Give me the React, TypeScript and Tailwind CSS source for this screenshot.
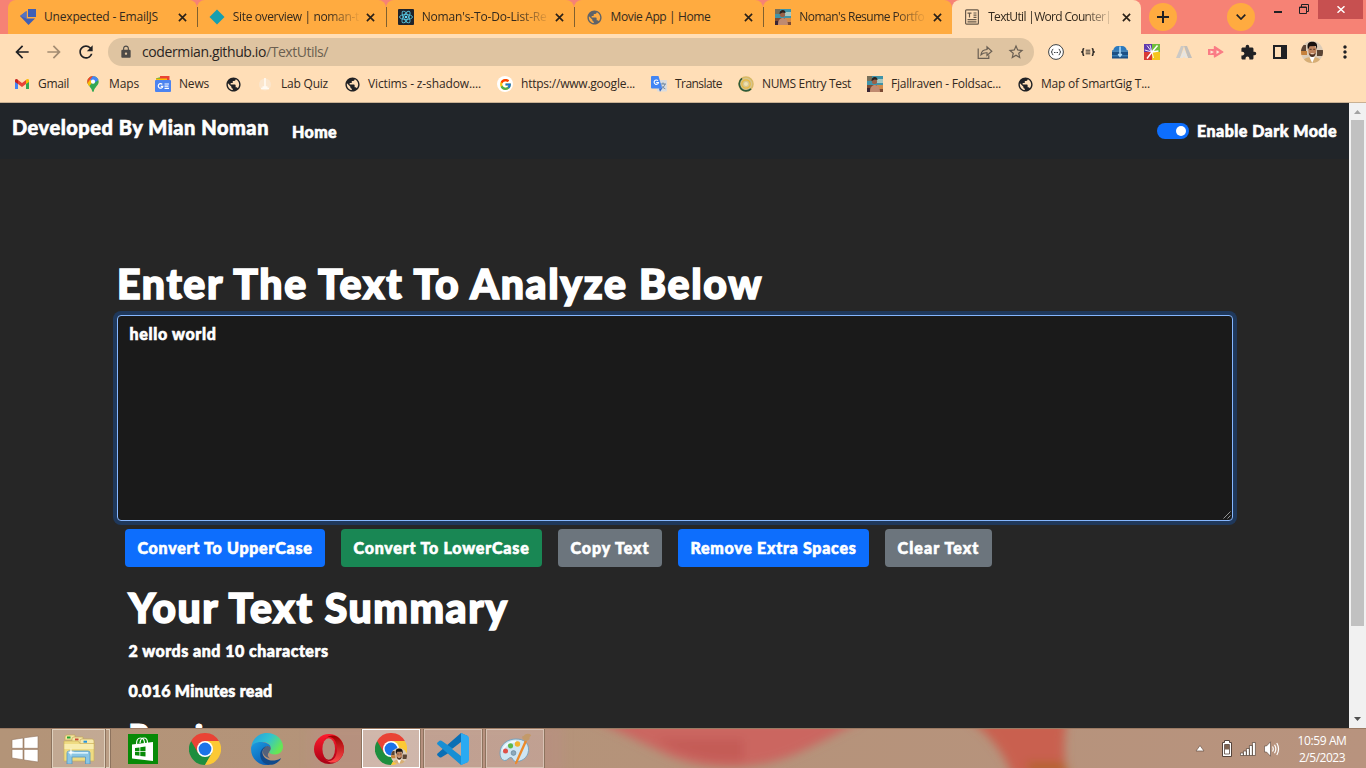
import { useLayoutEffect, useRef } from "react";
import type { ReactNode } from "react";
import {
  MdPublic,
  MdExtension,
  MdLock,
  MdStarOutline,
  MdRefresh,
  MdArrowBack,
  MdArrowForward,
  MdMoreVert,
} from "react-icons/md";
import { FcGoogle } from "react-icons/fc";

/* One line of text tracked so that it spans exactly `w` pixels. */
function Fit({ children, w, className = "" }: { children: string; w: number; className?: string }) {
  const ref = useRef<HTMLSpanElement>(null);
  useLayoutEffect(() => {
    const el = ref.current;
    if (!el) return;
    el.style.letterSpacing = "0px";
    const natural = el.getBoundingClientRect().width;
    el.style.letterSpacing = `${(w - natural) / children.length}px`;
  }, [children, w]);
  return (
    <span ref={ref} className={`inline-block whitespace-nowrap ${className}`}>
      {children}
    </span>
  );
}

/* ---------- small icons ---------- */

const Close = ({ className = "" }: { className?: string }) => (
  <svg viewBox="0 0 10 10" className={`h-[9px] w-[9px] shrink-0 ${className}`}>
    <path d="M1 1 9 9M9 1 1 9" stroke="#2a2118" strokeWidth="1.8" />
  </svg>
);

const EmailJs = () => (
  <svg viewBox="0 0 16 16" className="h-4 w-4">
    <path d="M8 0h8v8H8z" fill="#3f5fb5" />
    <path d="M0 7 6.500 2v7.500H15L8.500 16z" fill="#3f5fb5" />
    <path d="M0 7 6.500 2v7.500z" fill="#5673c0" />
  </svg>
);

const Netlify = () => (
  <svg viewBox="0 0 16 16" className="h-4 w-4">
    <path d="M8 .5 15.500 8 8 15.500.5 8z" fill="#159fb0" />
  </svg>
);

const ReactLogo = () => (
  <svg viewBox="0 0 16 16" className="h-4 w-4">
    <rect width="16" height="16" rx="1" fill="#20232a" />
    <g fill="none" stroke="#56c4dd" strokeWidth=".9">
      <ellipse cx="8" cy="8" rx="6.500" ry="2.500" />
      <ellipse cx="8" cy="8" rx="6.500" ry="2.500" transform="rotate(60 8 8)" />
      <ellipse cx="8" cy="8" rx="6.500" ry="2.500" transform="rotate(120 8 8)" />
    </g>
    <circle cx="8" cy="8" r="1.300" fill="#61dafb" />
  </svg>
);

const Portrait = () => (
  <svg viewBox="0 0 16 16" className="h-4 w-4">
    <rect width="16" height="16" fill="#3f93a8" />
    <path d="M0 0h5v5H0z" fill="#77705a" />
    <path d="M10 3h6v4h-6z" fill="#a8c8c0" />
    <path d="M0 9h16v7H0z" fill="#7b4a33" />
    <path d="M10 9h6v4h-6z" fill="#d08a4a" />
    <path d="M3 16c0-5 2-7 5-7s5 3 5 7z" fill="#c08a70" />
    <circle cx="7.500" cy="5.500" r="2.600" fill="#9a6248" />
    <path d="M4.500 5c0-3 1.500-4 3.300-4s3 1.500 2.700 3l-3-.6-1.800 1z" fill="#2c211c" />
    <path d="M0 12h3v4H0z" fill="#3a2534" />
  </svg>
);

const DocIcon = () => (
  <svg viewBox="0 0 16 16" className="h-4 w-4" fill="none" stroke="#66584a" strokeWidth="1.200">
    <rect x="1.600" y=".8" width="12.800" height="14.400" rx="1" />
    <path d="M3.500 4.200h4M5.500 4v4.500M9.500 4h3M9.500 6.200h3M9.500 8.400h3M3.500 10.700h9M3.500 12.900h9" />
  </svg>
);

const Gmail = () => (
  <svg viewBox="0 0 16 16" className="h-4 w-4">
    <path d="M1 3.800V13h3V7z" fill="#4285f4" />
    <path d="M15 3.800V13h-3V7z" fill="#34a853" />
    <path d="M4 4v4l4 3 4-3V4L8 7z" fill="#ea4335" />
    <path d="M1 4.500C1 2.700 2.800 2.500 4 3.700v4.400L1 6z" fill="#c5221f" />
    <path d="M15 4.500c0-1.800-1.800-2-3-.8v4.400L15 6z" fill="#fbbc04" />
  </svg>
);

const Maps = () => (
  <svg viewBox="0 0 16 16" className="h-4 w-4">
    <defs>
      <clipPath id="pin">
        <path d="M8 0a5.700 5.700 0 0 1 5.700 5.700C13.700 9.500 9.500 11 8.800 15.300q-.8 1.400-1.600 0C6.500 11 2.300 9.500 2.300 5.700A5.700 5.700 0 0 1 8 0z" />
      </clipPath>
    </defs>
    <g clipPath="url(#pin)">
      <path d="M0 0h16v16H0z" fill="#34a853" />
      <path d="M0 0h12L3 12H0z" fill="#fbbc04" />
      <path d="M7 0h9v2L8 8 5 3z" fill="#4285f4" />
      <path d="M1 0h7L4 5 2 8z" fill="#ea4335" />
    </g>
    <circle cx="8" cy="5.700" r="2.100" fill="#fff" />
  </svg>
);

const News = () => (
  <svg viewBox="0 0 16 16" className="h-4 w-4">
    <path d="M1 2.200 11 0l2 5H2z" fill="#34a853" />
    <path d="M5 0h9.500v5H5z" fill="#ea4335" />
    <path d="M1 2.500h11V6H1z" fill="#fbbc04" />
    <rect y="4" width="16" height="12" rx="1" fill="#4b83f0" />
    <path d="M7.300 8.400a2.300 2.300 0 1 0 .5 2H5.800M9.500 8h4.500M9.500 10.200h4M9.500 12.400h4.500" fill="none" stroke="#fff" strokeWidth="1.200" />
  </svg>
);

const Lab = () => (
  <svg viewBox="0 0 16 16" className="h-4 w-4">
    <circle cx="8" cy="8.500" r="6" fill="#fbe6cd" />
    <path d="M8 2v9M4 12.500h8M5.500 11h5" stroke="#fffaf2" strokeWidth="1.600" />
  </svg>
);

const GoogleBadge = () => (
  <span className="flex h-4 w-4 items-center justify-center rounded-full bg-white">
    <FcGoogle size={13} />
  </span>
);

const Translate = () => (
  <svg viewBox="0 0 16 16" className="h-4 w-4">
    <rect x="6" y="4" width="10" height="11.500" rx=".8" fill="#dadcdf" />
    <path d="M9 8h6M12 6.500V8M14 8c-.5 2.500-2.500 4-4 4.800M10.500 9.500c1 1.800 2 2.500 3.800 3.300" stroke="#607d9b" strokeWidth=".9" fill="none" />
    <path d="M0 1Q0 0 1 0h6.500l3.700 12.500H1q-1 0-1-1z" fill="#4285f4" />
    <path d="M8 12.500h3.200L9 15.800z" fill="#3367c6" />
    <path d="M7 4.700a2.200 2.200 0 1 0 .5 1.800H5.200" fill="none" stroke="#fff" strokeWidth="1.100" />
  </svg>
);

const Nums = () => (
  <svg viewBox="0 0 16 16" className="h-4 w-4" fill="none">
    <circle cx="8" cy="8" r="7" fill="#d7c58e" stroke="#d8b965" strokeWidth="1.500" />
    <path d="M4 2.400a7 7 0 0 0 4 12.500q3 0 5-2" stroke="#2e5a3c" strokeWidth="1.700" />
    <circle cx="8" cy="8" r="4.200" stroke="#e9b93f" strokeWidth="1.200" />
    <circle cx="8" cy="8" r="2" fill="#efe1ae" />
  </svg>
);

const Globe = ({ color = "#202124" }: { color?: string }) => (
  <MdPublic size={17} color={color} className="ml-px block shrink-0" />
);

const Face = ({ className }: { className: string }) => (
  <svg viewBox="0 0 22 22" className={className}>
    <defs>
      <clipPath id="face">
        <circle cx="11" cy="11" r="11" />
      </clipPath>
    </defs>
    <g clipPath="url(#face)">
      <path d="M0 0h22v22H0z" fill="#dcccb8" />
      <path d="M0 4h5v6H0zM16 9h6v6h-6z" fill="#5b4434" />
      <path d="M0 10h6v4H0z" fill="#c6813c" />
      <path d="M2 22c0-4.500 4-6 9-6s9 1.500 9 6z" fill="#d8ae74" />
      <path d="m8.500 16 2.700 6 2.600-6z" fill="#fff" />
      <ellipse cx="11.300" cy="9.500" rx="4" ry="5.500" fill="#bd835e" />
      <path d="M7 8.500C5.500 2 8 .8 11.500.8S17 3 15.800 8.500L14.800 5l-6 .2z" fill="#17110f" />
      <path d="M7.800 12q3.500 3 7 0-.8 4-3.500 4t-3.500-4z" fill="#4a3024" />
      <path d="M9.800 12.600h3" stroke="#f0dccb" strokeWidth=".9" />
      <path d="M8.600 8.300h2M12.200 8.300h2" stroke="#3a241b" strokeWidth=".8" />
    </g>
  </svg>
);

/* ---------- browser ---------- */

type Tab = { icon: ReactNode; title: string; w: number; fade?: boolean; active?: boolean };

const tabs: Tab[] = [
  { icon: <EmailJs />, title: "Unexpected - EmailJS", w: 114 },
  { icon: <Netlify />, title: "Site overview | noman-t", w: 126, fade: true },
  { icon: <ReactLogo />, title: "Noman's-To-Do-List-Re", w: 125, fade: true },
  { icon: <Globe color="#5f6368" />, title: "Movie App | Home", w: 100 },
  { icon: <Portrait />, title: "Noman's Resume Portfo", w: 125, fade: true },
  { icon: <DocIcon />, title: "TextUtil |Word Counter|", w: 123, fade: true, active: true },
];

function TabStrip() {
  return (
    <div className="flex h-[34px] bg-[#f68275] pl-2">
      <div className="flex w-[1133px] rounded-t-[8px]">
        {tabs.map((t, i) => (
          <div
            key={t.title}
            className={
              t.active
                ? "relative flex h-[34px] flex-1 items-center rounded-t-[8px] bg-[#ffdeb7] pl-3"
                : "relative flex h-[34px] flex-1 items-center rounded-t-[8px] bg-[#ffab40] pl-3"
            }
          >
            {i > 0 && !t.active && <span className="absolute left-0 top-[7px] h-5 w-px bg-[#80602f]" />}
            <span className="flex h-4 w-4 shrink-0 items-center justify-center">{t.icon}</span>
            <span
              className={
                t.fade
                  ? "ml-2 w-[126px] shrink-0 text-[12px] leading-4 text-[#33291d] [mask-image:linear-gradient(to_right,black_95px,transparent_128px)]"
                  : "ml-2 w-[126px] shrink-0 text-[12px] leading-4 text-[#33291d]"
              }
            >
              <Fit w={t.w}>{t.title}</Fit>
            </span>
            <Close className="ml-[7.5px]" />
          </div>
        ))}
      </div>
      <div className="ml-2 mt-[3px] flex h-7 w-7 items-center justify-center rounded-full bg-[#ffab40]">
        <svg viewBox="0 0 12 12" className="h-3 w-3">
          <path d="M6 0v12M0 6h12" stroke="#202124" strokeWidth="2" />
        </svg>
      </div>
      <div className="ml-[50px] mt-[3px] flex h-7 w-7 items-center justify-center rounded-full bg-[#ffab40]">
        <svg viewBox="0 0 10 6" className="h-[6px] w-[10px]">
          <path d="M.7.700 5 5 9.300.7" fill="none" stroke="#202124" strokeWidth="1.700" />
        </svg>
      </div>
      <div className="ml-[19px] mt-[11px] h-[2px] w-2 bg-[#202124]" />
      <svg viewBox="0 0 10 10" className="ml-[17px] mt-1 h-[10px] w-[10px]" fill="none" stroke="#202124">
        <path d="M.5 3h7v6.500h-7zM.5 3.500h7" />
        <path d="M2.500 3V.5h7V7.500H8" />
      </svg>
      <div className="ml-[9px] flex h-[19px] w-[45px] items-center justify-center bg-[#c75050]">
        <svg viewBox="0 0 8 7" className="h-[7px] w-2">
          <path d="m.5.300 7 6.400M7.500.300l-7 6.400" stroke="#fff" strokeWidth="1.500" />
        </svg>
      </div>
    </div>
  );
}

function Extensions() {
  return (
    <div className="ml-[14px] flex items-center gap-4">
      <svg viewBox="0 0 16 16" className="h-4 w-4" fill="none" stroke="#3c4043">
        <circle cx="8" cy="8" r="7.400" fill="#fff" />
        <path d="M5.300 5.200q-1.200 0-1.100 1.300T3 8q1.300 0 1.200 1.500T5.300 10.800M10.700 5.200q1.200 0 1.100 1.300T13 8q-1.300 0-1.200 1.500T10.700 10.800" strokeWidth="1" />
        <path d="M6 8.500h1M7.500 8.500h1M9 8.500h1" strokeWidth="1" />
      </svg>
      <svg viewBox="0 0 16 16" className="h-4 w-4" fill="none" stroke="#2b2723">
        <path d="M4.200 4.700Q2.800 4.500 3 6.300T1.300 8Q3.200 8 3 9.700t1.200 1.600M11.800 4.700q1.400-.2 1.200 1.600T14.700 8Q12.800 8 13 9.700t-1.200 1.600" strokeWidth="1.500" />
        <path d="M5.700 6.200h4.600M5.700 8h4.600M5.700 9.800h4.600" strokeWidth=".9" />
      </svg>
      <svg viewBox="0 0 16 16" className="h-4 w-4">
        <path d="M1 7q1-5 5-5h4q4 0 5 5z" fill="#2b79bd" />
        <path d="M0 6.500h16v8H0z" fill="#1d5185" />
        <path d="M0 6.500h16v1.200H0z" fill="#5c9bcb" />
        <path d="M0 11h16v1.500H0z" fill="#377bb2" />
        <path d="M8 2.500v9M6.200 10 8 12.200 9.800 10" fill="none" stroke="#b3defa" strokeWidth="1.500" />
      </svg>
      <svg viewBox="0 0 16 16" className="h-4 w-4">
        <path d="M0 0h8v8H0z" fill="#6139ad" />
        <path d="M8 0h8v8H8z" fill="#72bd3a" />
        <path d="M0 8h8v8H0z" fill="#d93a34" />
        <path d="M8 8h8v8H8z" fill="#f5c51b" />
        <path d="M8 8 13.500 1.500M8 8 14.500 7M8 8 3 14.500" stroke="#fff" strokeWidth="1.500" fill="none" />
        <path d="M7.800 8 3 1.500M7.800 8 .8 6M7.800 8 6 1M8 8l1.500 6" stroke="#fff" strokeWidth=".9" fill="none" />
      </svg>
      <svg viewBox="0 0 16 16" className="h-4 w-4">
        <path d="M5 2h3L4 14H0z" fill="#ccc9c5" />
        <path d="M8 2h3l5 12h-4z" fill="#c2bfbb" />
        <path d="m8 5 4 9H9l-1-2-1 2H4z" fill="#e7e4df" />
      </svg>
      <svg viewBox="0 0 16 16" className="h-4 w-4">
        <path d="M0 5h6v6H0z" fill="#fa7c85" />
        <path d="M6.500 2.700 14.800 8l-8.300 5z" fill="#fa7c85" stroke="#fa7c85" strokeWidth="1.400" strokeLinejoin="round" />
        <path d="M8.500 6.200 11.500 8l-3 1.900z" fill="#fde7d2" />
        <path d="M2.500 6.500 6 8l-3.500 1.800z" fill="#fde7d2" />
      </svg>
      <MdExtension size={17} color="#202124" className="-mx-[0.5px]" />
      <svg viewBox="0 0 16 16" className="h-4 w-4">
        <path d="M1 1h14v14H1zM3 3v10h6V3z" fill="#202124" fillRule="evenodd" />
      </svg>
      <Face className="-ml-[3px] h-[22px] w-[22px]" />
      <MdMoreVert size={20} color="#202124" className="-ml-1" />
    </div>
  );
}

function Toolbar() {
  return (
    <div className="flex h-9 items-center bg-[#ffdeb7] pl-3">
      <MdArrowBack size={20} color="#202124" />
      <MdArrowForward size={20} color="#a38c72" className="ml-3" />
      <MdRefresh size={20} color="#202124" className="ml-3" />
      <div className="ml-3 flex h-7 w-[926px] items-center rounded-full bg-[#dfc4a1] pl-[11px]">
        <MdLock size={14} color="#4d4a47" />
        <span className="ml-[9px] w-[833px] text-[14px] leading-5 text-[#2a251f]">
          <Fit w={124}>codermian.github.io</Fit>
          <Fit w={62} className="text-[#6b5f50]">/TextUtils/</Fit>
        </span>
        <svg viewBox="0 0 16 16" className="ml-[2px] h-4 w-4" fill="none" stroke="#6a5f53" strokeWidth="1.200">
          <path d="M1.200 4.500v9.800h10.600v-3" />
          <path d="M4 10.800q.5-5 6-5.300V2.800L14.800 7.300 10 11.500V8.800Q6.500 8.500 4 10.800z" />
        </svg>
        <MdStarOutline size={18} color="#6a5f53" className="ml-[14px]" />
      </div>
      <Extensions />
    </div>
  );
}

const bookmarks: { icon: ReactNode; label?: string; w: number }[] = [
  { icon: <Gmail />, label: "Gmail", w: 31 },
  { icon: <Maps />, label: "Maps", w: 30 },
  { icon: <News />, label: "News", w: 30 },
  { icon: <Globe />, w: 0 },
  { icon: <Lab />, label: "Lab Quiz", w: 47 },
  { icon: <Globe />, label: "Victims - z-shadow....", w: 113 },
  { icon: <GoogleBadge />, label: "https://www.google...", w: 114 },
  { icon: <Translate />, label: "Translate", w: 47 },
  { icon: <Nums />, label: "NUMS Entry Test", w: 89 },
  { icon: <Portrait />, label: "Fjallraven - Foldsac...", w: 110 },
  { icon: <Globe />, label: "Map of SmartGig T...", w: 109 },
];

function Bookmarks() {
  return (
    <div className="flex h-[33px] items-center gap-4 border-b border-[#c9b193] bg-[#ffdeb7] pb-[4px] pl-[14px] text-[12px] leading-4 text-[#33291d]">
      {bookmarks.map((b, i) => (
        <div key={i} className="flex shrink-0 items-center gap-2">
          <span className="flex h-4 w-4 items-center justify-center">{b.icon}</span>
          {b.label && <Fit w={b.w}>{b.label}</Fit>}
        </div>
      ))}
    </div>
  );
}

/* ---------- page ---------- */

const buttons = [
  { label: "Convert To UpperCase", w: 175, cls: "bg-[#0d6efd]" },
  { label: "Convert To LowerCase", w: 176, cls: "bg-[#198754]" },
  { label: "Copy Text", w: 79, cls: "bg-[#6c757d]" },
  { label: "Remove Extra Spaces", w: 166, cls: "bg-[#0d6efd]" },
  { label: "Clear Text", w: 82, cls: "bg-[#6c757d]" },
];

function Page() {
  return (
    <div className="flex h-[625px] overflow-hidden">
      <div className="flex-1 overflow-hidden bg-[#262626] font-['Lato',sans-serif] text-[16px] leading-6 font-black text-white [-webkit-text-stroke:0.6px_white]">
        <nav className="flex h-14 items-start bg-[#212529] px-3">
          <Fit w={257} className="mt-[9px] text-[20px] leading-[30px]">Developed By Mian Noman</Fit>
          <Fit w={45} className="ml-[23px] mt-[17px]">Home</Fit>
          <div className="ml-auto mt-4 flex items-center">
            <span className="flex h-4 w-8 items-center justify-end rounded-full bg-[#0d6efd] pr-[3px]">
              <span className="h-[10px] w-[10px] rounded-full bg-white" />
            </span>
            <Fit w={140} className="ml-2">Enable Dark Mode</Fit>
          </div>
        </nav>
        <main className="ml-[117px] w-[1116px] pt-[100px]">
          <h1 className="h-12 text-[41px] leading-[49px] [-webkit-text-stroke:1.6px_white]">
            <Fit w={646}>Enter The Text To Analyze Below</Fit>
          </h1>
          <div className="relative mt-2 h-[206px] rounded-[4px] border border-[#86b7fe] bg-[#1a1a1a] px-[11.5px] py-[6px] shadow-[0_0_0_4px_rgba(13,110,253,0.25)]">
            <Fit w={87}>hello world</Fit>
            <svg viewBox="0 0 8 8" className="absolute bottom-[1px] right-[1px] h-2 w-2">
              <path d="M.5 7.500l7-7M4.500 7.500l3-3" stroke="#b5b5b5" strokeWidth=".8" />
            </svg>
          </div>
          <div className="mt-2 ml-2 flex gap-4">
            {buttons.map((b) => (
              <button key={b.label} className={`flex h-[38px] items-center rounded-[4px] px-[12.5px] ${b.cls}`}>
                <Fit w={b.w}>{b.label}</Fit>
              </button>
            ))}
          </div>
          <section className="ml-[11.5px] mt-4">
            <h1 className="h-12 text-[41px] leading-[49px] [-webkit-text-stroke:1.6px_white]">
              <Fit w={380}>Your Text Summary</Fit>
            </h1>
            <p className="mt-2 h-6"><Fit w={200}>2 words and 10 characters</Fit></p>
            <p className="mt-4 h-6"><Fit w={144}>0.016 Minutes read</Fit></p>
            <h2 className="mt-[14px] text-[32px] leading-[38px] [-webkit-text-stroke:1.2px_white]"><Fit w={118}>Preview</Fit></h2>
          </section>
        </main>
      </div>
      <div className="flex w-[17px] flex-col items-center bg-[#f1f1f1]">
        <svg viewBox="0 0 17 17" className="h-[17px] w-[17px] shrink-0">
          <path d="M5 11h7L8.500 7z" fill="#a3a3a3" />
        </svg>
        <div className="h-[506px] w-[13px] shrink-0 bg-[#c1c1c1]" />
        <svg viewBox="0 0 17 17" className="mt-auto h-[17px] w-[17px] shrink-0">
          <path d="M5 6h7l-3.500 4z" fill="#505050" />
        </svg>
      </div>
    </div>
  );
}

/* ---------- taskbar ---------- */

const Chrome = () => (
  <svg viewBox="0 0 32 32" className="h-8 w-8">
    <path d="M2.140 8A16 16 0 0 0 16 32l6.930-12z" fill="#1e8e3e" />
    <path d="M16 8h13.860A16 16 0 0 1 16 32l6.930-12z" fill="#fcc934" />
    <path d="M16 8h13.860A16 16 0 0 0 2.140 8l6.930 12z" fill="#e94335" />
    <circle cx="16" cy="16" r="8" fill="#fff" />
    <circle cx="16" cy="16" r="6.400" fill="#1a73e8" />
  </svg>
);

const Edge = () => (
  <svg viewBox="0 0 32 32" className="h-8 w-8">
    <defs>
      <linearGradient id="edgeTop" x1="0" y1="0" x2="1" y2=".5">
        <stop offset="0" stopColor="#239be0" />
        <stop offset=".55" stopColor="#31c3cf" />
        <stop offset="1" stopColor="#66e655" />
      </linearGradient>
      <linearGradient id="edgeMid" x1="0" y1="0" x2=".6" y2="1">
        <stop offset="0" stopColor="#1b9de2" />
        <stop offset="1" stopColor="#0c5fb5" />
      </linearGradient>
    </defs>
    <path d="M.3 14C1.500 5.500 8 0 16 0c9.500 0 16 7 16 13.500 0 5-3.700 8-8 8-3.700 0-5.800-1.500-5.800-2.600 0-1 1.600-1.300 1.600-4C19.800 11 15.500 9 11.500 9 5 9 1 12 .3 14z" fill="url(#edgeTop)" />
    <path d="M.2 14C1.500 10.500 6 8.700 10.500 8.900c5.500.2 9.300 3 9.300 6-1-1.300-2.500-2-4-1.700C9 15.500 8.500 26 19 31.700 8 34-1.200 25 .2 14z" fill="url(#edgeMid)" />
    <path d="M15.500 13.300C10 16 10.500 22 14.500 25.200c4.500 3.500 10.500 2.700 14.800.2q.8-.3.400.6C26 31.500 19.500 33 15 31 7.500 27.500 7 15.500 15.500 13.300z" fill="#114a8b" />
    <path d="M15.500 13.300c-3.500 1.500-4.500 5.500-2.500 8.700q2 3 6 3.500-4-3-.8-6.600c0-1 1.600-1.300 1.600-4q-2-2.500-4.300-1.600z" fill="#123f7d" opacity=".6" />
  </svg>
);

const Opera = () => (
  <svg viewBox="0 0 30 30" className="h-[30px] w-[30px]">
    <defs>
      <linearGradient id="op" x1="0" y1="0" x2="0" y2="1">
        <stop offset="0" stopColor="#ff1b2d" />
        <stop offset="1" stopColor="#a70014" />
      </linearGradient>
      <linearGradient id="op2" x1="0" y1="0" x2="0" y2="1">
        <stop offset="0" stopColor="#9c0000" />
        <stop offset="1" stopColor="#ff4b4b" />
      </linearGradient>
    </defs>
    <circle cx="15" cy="15" r="15" fill="url(#op)" />
    <path d="M10 5.800C11.500 4 13 3 15 3c5 0 8 5.500 8 12s-3 12-8 12c-2 0-3.500-1-5-2.800C15 30 21.500 29.500 25 26c6.500-6 6.500-16 0-22-3.500-3.500-10-4-15 1.800z" fill="url(#op2)" />
    <ellipse cx="14.700" cy="15" rx="6.300" ry="10.800" fill="#b6917f" />
  </svg>
);

const Explorer = () => (
  <svg viewBox="0 0 32 30" className="h-[30px] w-8">
    <path d="M2 3q0-2 2-2h8v5H2z" fill="#f3e5a1" stroke="#c5a957" strokeWidth=".7" />
    <path d="M9 5q0-2 2-2h9v6H9z" fill="#f4e6a6" stroke="#c5a957" strokeWidth=".7" />
    <path d="M17 7q0-2 2-2h10q2 0 2 2v5H17z" fill="#f6e9ad" stroke="#c5a957" strokeWidth=".7" />
    <path d="M4 2.500h3.500v2H4z" fill="#24a32f" />
    <path d="M12 4.500h3.500v2H12z" fill="#cb4a34" />
    <path d="M20.500 6.700H24v2h-3.500z" fill="#2592db" />
    <path d="M1 7h14l2 2.500h14V27H1z" fill="#efdb82" stroke="#cbb15d" strokeWidth=".7" />
    <path d="M1.500 10h29v5h-29z" fill="#f8ecae" />
    <path d="M4 19q0-2 2-2h19q2 0 2 2v11h-4.500v-7H9v7H4z" fill="#8ac5e4" stroke="#5798bd" strokeWidth=".8" />
    <path d="M6 18h19v1.700H6z" fill="#d8f1fc" />
    <path d="m8 13.500.7 4L12 18l-3.300.8L8 22.500l-.8-3.700L4 18l3.200-.6z" fill="#fff" />
  </svg>
);

const Store = () => (
  <svg viewBox="0 0 30 30" className="h-[30px] w-[30px]">
    <path d="M0 0h30v30H0z" fill="#078a07" />
    <path d="M4 10.500 25 8v19L4 24.500z" fill="#fff" />
    <path d="M8.500 10q0-6 4-6t4 5.500M12 9q.5-5 4-5t3.500 5" fill="none" stroke="#fff" strokeWidth="1.200" />
    <path d="m7 14 4.500-.6V17H7zm5.300-.7 5.200-.7V17h-5.200zM7 17.800h4.500v4L7 21.300zm5.300 0h5.200v4.700l-5.200-.6z" fill="#078a07" />
  </svg>
);

const VsCode = () => (
  <svg viewBox="0 0 32 32" className="h-8 w-8">
    <path d="M24 0 31 3.300v5L4.500 24.200q-1 .8-2 0L.5 22.500q-.8-1 0-2z" fill="#0a6fb5" />
    <path d="M2.500 7.800q1-.8 2 0L31 26v3l-7 3L.5 11.500q-.8-1 0-2z" fill="#178fd4" />
    <path d="m24 0 6.500 2.800q1.500.8 1.500 2.200v22q0 1.500-1.500 2.200L24 32V0z" fill="#2aaaf2" />
    <path d="M24 9v14l-9-7z" fill="#c3a699" />
  </svg>
);

const Paint = () => (
  <svg viewBox="0 0 32 32" className="h-8 w-8">
    <path d="M1 20C1 11 9 6 17 6s13 4 12.500 11.500C29 25 22 29 16.500 28.500c-3-.3-2-3.500-4.500-4s-3.500 3.500-6.500 3C2.500 27 1 24 1 20z" fill="#cfe6f3" stroke="#6f9fbc" strokeWidth=".9" />
    <path d="M4 18c1-6 7-9.500 13-9.500" stroke="#f1faff" strokeWidth="1.800" fill="none" />
    <circle cx="6.500" cy="18" r="2.500" fill="#de5048" />
    <circle cx="11.500" cy="12.800" r="2.600" fill="#5fb84a" />
    <circle cx="18.500" cy="11" r="2.700" fill="#f3b32d" />
    <circle cx="14.500" cy="20" r="2.400" fill="#8da9bb" stroke="#5e7e92" strokeWidth=".6" />
    <path d="m26 7 2 1.500-9.500 21q-1 2-2 1.700-.8-.4-.3-2z" fill="#ec8a2b" />
    <path d="M26 1.500q4-2 6.500 1Q30 3 30.500 6q-2.500 3-5 1.500T23 3.500q1.500.3 3-2z" fill="#c39a69" />
  </svg>
);

function Taskbar() {
  return (
    <div className="relative flex h-10 overflow-hidden border-t border-[#9b7b64] bg-linear-to-r from-[#b39478] via-[#b5937a] to-[#b8937e] text-white">
      <svg viewBox="0 0 1366 40" className="absolute inset-0 h-full w-full">
        <defs>
          <filter id="soft" x="-10%" y="-50%" width="120%" height="200%">
            <feGaussianBlur stdDeviation="5" />
          </filter>
        </defs>
        <rect x="300" y="-5" width="260" height="50" fill="#b98f84" opacity=".5" filter="url(#soft)" />
        <g filter="url(#soft)">
          <path d="M590-10h278q-40 22-66 34t-62 15q-45 1-76-14t-74-35z" fill="#cb6660" />
          <path d="M655 10h90v22q-50 4-90-22z" fill="#c45c57" />
          <path d="M975-10h102q-6 28 0 60h-55q-14-38-47-60z" fill="#c9604f" />
          <path d="M1035 34h38l6 12h-40z" fill="#b4642d" />
        </g>
      </svg>
      <div className="relative flex flex-1">
        <div className="flex w-[50px] items-center justify-center">
          <svg viewBox="0 0 28 28" className="h-7 w-7">
            <path d="M1 4.700 12 3v10.300H1zM13 2.800 27 1v12.300H13zM1 14.400h11v10.300L1 23zM13 14.400h14V27l-14-2z" fill="#fff" stroke="#947560" strokeWidth=".6" />
          </svg>
        </div>
        <div className="flex w-[62px] pl-[2px]">
          <div className="flex w-[53px] items-center justify-center border border-[#dfd0bd] bg-white/20 outline outline-[#8d735e]">
            <Explorer />
          </div>
          <div className="ml-px w-[4px] border border-l-0 border-[#dfd0bd] bg-white/10 outline outline-[#8d735e]" />
        </div>
        <div className="flex w-[62px] items-center justify-center"><Store /></div>
        <div className="flex w-[62px] items-center justify-center"><Chrome /></div>
        <div className="flex w-[62px] items-center justify-center"><Edge /></div>
        <div className="flex w-[62px] items-center justify-center"><Opera /></div>
        <div className="flex w-[62px] justify-center">
          <div className="relative flex w-[58px] items-center justify-center border border-white bg-white/35 outline outline-[#8d735e]">
            <Chrome />
            <Face className="absolute left-[28px] top-[18px] h-4 w-4" />
          </div>
        </div>
        <div className="flex w-[62px] justify-center">
          <div className="flex w-[58px] items-center justify-center border border-[#d8c2b4] bg-white/15 outline outline-[#8d735e]">
            <VsCode />
          </div>
        </div>
        <div className="flex w-[62px] justify-center">
          <div className="flex w-[58px] items-center justify-center border border-[#d8c2b4] bg-white/15 outline outline-[#8d735e]">
            <Paint />
          </div>
        </div>
        <div className="ml-auto mr-5 flex items-center">
          <svg viewBox="0 0 10 7" className="h-[7px] w-[10px]">
            <path d="m5 .5 4 5.500H1z" fill="#fff" stroke="#6b5547" strokeWidth=".7" />
          </svg>
          <svg viewBox="0 0 10 17" className="ml-[17px] h-[17px] w-[10px]">
            <path d="M2.500.5h5v2H9.500v14H.5v-14h2z" fill="#fff" stroke="#55433a" />
            <path d="M3 4.500h4v5H3z" fill="#7d6250" />
            <path d="M2.500 4.500h5v9.500h-5z" fill="none" stroke="#55433a" strokeWidth=".8" />
          </svg>
          <svg viewBox="0 0 16 14" className="ml-[8px] h-[14px] w-4" fill="#fff" stroke="#55433a" strokeWidth=".7">
            <path d="M.4 11h3v2.500h-3zM3.400 9h3v4.500h-3zM6.400 6.500h3v7h-3zM9.400 3.500h3v10h-3zM12.400.5h3v13h-3z" />
          </svg>
          <svg viewBox="0 0 16 16" className="ml-[8px] h-4 w-4" fill="none" stroke="#fff" strokeWidth="1.200">
            <path d="M.5 5h2L6.500.800v14.400L2.500 11h-2z" fill="#fff" stroke="#55433a" strokeWidth=".6" />
            <path d="M8.500 5.500q1.500 2.500 0 5M10.500 3.800q2.700 4.200 0 8.400M12.800 2q3.500 6 0 12" />
          </svg>
          <div className="ml-[18px] flex w-12 flex-col items-center text-[12px] leading-[17px]">
            <Fit w={49}>10:59 AM</Fit>
            <Fit w={46}>2/5/2023</Fit>
          </div>
        </div>
      </div>
    </div>
  );
}

export default function App() {
  return (
    <div className="flex h-[768px] w-[1366px] flex-col overflow-hidden font-['Open_Sans','Noto_Sans',sans-serif]">
      <TabStrip />
      <Toolbar />
      <Bookmarks />
      <Page />
      <Taskbar />
    </div>
  );
}
